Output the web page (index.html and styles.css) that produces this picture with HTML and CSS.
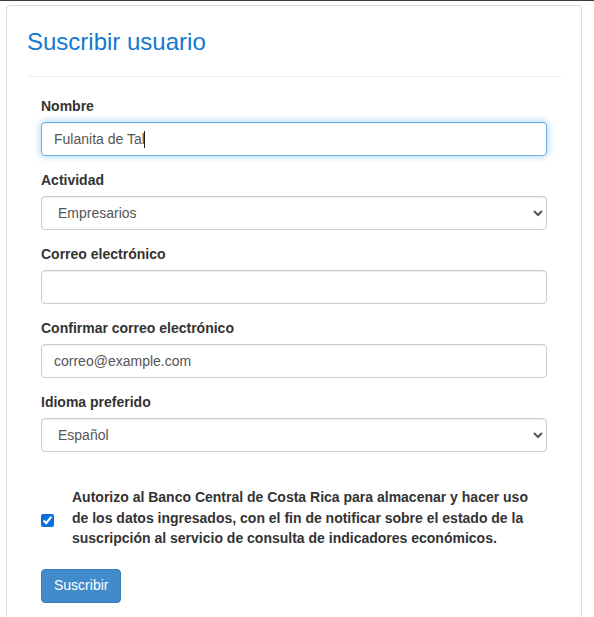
FILE: index.html
```html
<!DOCTYPE html>
<html lang="es">
<head>
<meta charset="utf-8">
<title>Suscribir usuario</title>
<link rel="stylesheet" href="styles.css">
</head>
<body>
<div class="topline"></div>
<div class="panel">
  <div class="panel-head">
    <h2 class="title">Suscribir usuario</h2>
  </div>
  <form class="form">
    <div class="group">
      <label class="label" for="nombre">Nombre</label>
      <div class="field-wrap">
        <input id="nombre" class="control focused" type="text" value="Fulanita de Tal">
        <span class="caret"></span>
      </div>
    </div>
    <div class="group">
      <label class="label" for="actividad">Actividad</label>
      <select id="actividad" class="control select">
        <option>Empresarios</option>
      </select>
    </div>
    <div class="group">
      <label class="label" for="correo">Correo electrónico</label>
      <input id="correo" class="control" type="text" value="">
    </div>
    <div class="group">
      <label class="label" for="correo2">Confirmar correo electrónico</label>
      <input id="correo2" class="control" type="text" value="correo@example.com">
    </div>
    <div class="group">
      <label class="label" for="idioma">Idioma preferido</label>
      <select id="idioma" class="control select">
        <option>Español</option>
      </select>
    </div>
    <div class="consent">
      <input class="check" type="checkbox" checked>
      <p class="consent-text">Autorizo al Banco Central de Costa Rica para almacenar y hacer uso de los datos ingresados, con el fin de notificar sobre el estado de la suscripción al servicio de consulta de indicadores económicos.</p>
    </div>
    <button class="btn" type="button">Suscribir</button>
  </form>
</div>
</body>
</html>
```

FILE: styles.css
```css
html, body {
  margin: 0;
  padding: 0;
  background: #fff;
}
body {
  font-family: "Liberation Sans", Arial, sans-serif;
  font-size: 14px;
  line-height: 1.42857;
  color: #333;
  height: 617px;
  overflow: hidden;
}
.topline {
  height: 1px;
  background: #3a3a3a;
}
.panel {
  box-sizing: border-box;
  height: 612px;
  margin: 4px 12px 0 6px;
  border: 1px solid #ddd;
  border-bottom: none;
  border-radius: 4px 4px 0 0;
  padding: 20px 20px 0;
}
.panel-head {
  border-bottom: 1px solid #eee;
  padding-bottom: 21px;
}
.title {
  margin: 3px 0 0;
  font-size: 24px;
  font-weight: normal;
  line-height: 1.1;
  color: #1379d0;
}
.form {
  padding: 20px 14px 0;
}
.group {
  margin-bottom: 15px;
}
.label {
  display: block;
  font-weight: bold;
  margin-bottom: 5px;
}
.field-wrap {
  position: relative;
}
.control {
  display: block;
  box-sizing: border-box;
  width: 100%;
  height: 34px;
  padding: 6px 12px;
  font-family: inherit;
  font-size: 14px;
  line-height: 1.42857;
  color: #555;
  background: #fff;
  border: 1px solid #ccc;
  border-radius: 4px;
  box-shadow: inset 0 1px 1px rgba(0,0,0,.075);
  margin: 0;
  outline: none;
}
.focused {
  border-color: #66afe9;
  box-shadow: inset 0 1px 1px rgba(0,0,0,.075), 0 0 8px rgba(102,175,233,.6);
}
.caret {
  position: absolute;
  left: 103px;
  top: 9px;
  width: 1px;
  height: 17px;
  background: #222;
}
.select {
  padding: 6px 12px;
}
.consent {
  display: flex;
  align-items: center;
  margin-top: 35px;
}
.check {
  width: 13px;
  height: 13px;
  margin: 4px 18px 0 0;
  flex: none;
  accent-color: #0b6fe0;
}
.consent-text {
  margin: 0;
  font-weight: bold;
  line-height: 20.5px;
}
.btn {
  margin-top: 20px;
  display: inline-block;
  height: 34px;
  padding: 6px 12px;
  font-family: inherit;
  font-size: 14px;
  line-height: 1.42857;
  color: #fff;
  background: #428bca;
  border: 1px solid #357ebd;
  border-radius: 4px;
}
```
